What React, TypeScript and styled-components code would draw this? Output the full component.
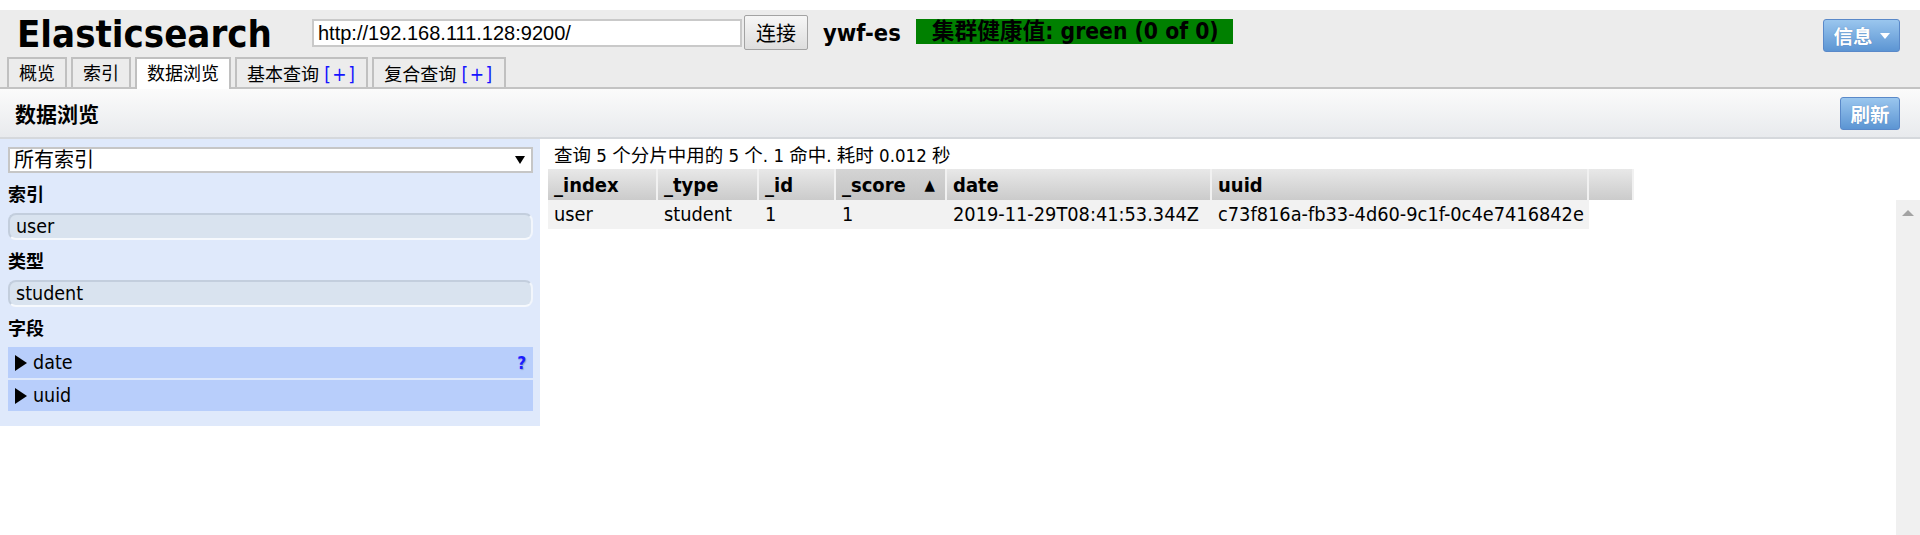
import React from "react";
import styled, { createGlobalStyle } from "styled-components";

const SANS = `"DejaVu Sans Condensed", "DejaVu Sans", "Noto Sans CJK SC", sans-serif`;

const GlobalStyle = createGlobalStyle`
  html, body { margin: 0; padding: 0; background: #ffffff; overflow: hidden; }
  body { font-family: ${SANS}; font-stretch: condensed; color: #000; }
  * { box-sizing: border-box; }
`;

const Page = styled.div`
  height: 100vh;
  display: flex;
  flex-direction: column;
  padding-top: 10px;
`;

const Header = styled.header`
  flex: none;
  background: #ececec;
  border-bottom: 2px solid #c3c3c3;
  display: flex;
  flex-direction: column;
`;

const HeaderTop = styled.div`
  height: 47px;
  display: flex;
  align-items: flex-start;
  padding: 0 20px 0 17px;
`;

const Title = styled.h1`
  flex: 0 0 295px;
  margin: 2px 0 0 0;
  font-size: 38px;
  line-height: 45px;
  font-weight: bold;
  white-space: nowrap;
`;

const UrlInput = styled.input`
  width: 430px;
  height: 28px;
  margin-top: 9px;
  border: 2px solid #c9c9c9;
  background: #fff;
  padding: 0 4px;
  font-family: "Liberation Sans", Arial, sans-serif;
  font-stretch: normal;
  font-size: 20px;
  color: #000;
  outline: none;
`;

const ConnectButton = styled.button`
  width: 64px;
  height: 35px;
  margin: 5px 0 0 2px;
  border: 1px solid #a3a3a3;
  border-radius: 2px;
  background: linear-gradient(#f6f6f6, #dedede);
  font-family: ${SANS};
  font-size: 20px;
  color: #000;
  padding: 0;
`;

const ClusterName = styled.span`
  margin: 10px 0 0 15px;
  font-size: 23.5px;
  line-height: 26px;
  font-weight: bold;
`;

const HealthBadge = styled.span`
  width: 317px;
  height: 25px;
  margin: 9px 0 0 15px;
  padding-left: 16px;
  background: #008000;
  font-size: 22.7px;
  line-height: 25px;
  font-weight: bold;
  white-space: nowrap;
  overflow: hidden;
`;

const BlueButton = styled.button<{ $w: number }>`
  width: ${(p) => p.$w}px;
  height: 33px;
  border: 1px solid #5a89c9;
  border-radius: 3px;
  background: linear-gradient(#9ac6ee, #5c95d3);
  color: #fff;
  font-family: ${SANS};
  font-size: 19.5px;
  font-weight: bold;
  display: flex;
  align-items: center;
  justify-content: center;
  padding: 0;
  text-shadow: 0 0 1px rgba(40, 80, 140, 0.5);
`;

const InfoWrap = styled.div`
  margin: 9px 0 0 auto;
`;

const Caret = styled.span`
  width: 0;
  height: 0;
  margin-left: 7px;
  border-top: 6px solid #fff;
  border-left: 5px solid transparent;
  border-right: 5px solid transparent;
`;

const Tabs = styled.nav`
  height: 30px;
  display: flex;
  align-items: flex-start;
  gap: 4px;
  padding-left: 7px;
`;

const Tab = styled.div<{ $active?: boolean }>`
  height: ${(p) => (p.$active ? 32 : 30)}px;
  position: relative;
  z-index: ${(p) => (p.$active ? 1 : 0)};
  padding: 2px 10px 0;
  border: 2px solid #c0c0c0;
  border-bottom: 0;
  background: ${(p) => (p.$active ? "#ffffff" : "#ececec")};
  font-size: 18px;
  line-height: 26px;
  white-space: nowrap;
  overflow: hidden;
`;

const Plus = styled.span`
  color: #1515ff;
  font-size: 19px;
  letter-spacing: 1.5px;
`;

const Toolbar = styled.div`
  flex: none;
  height: 50px;
  border-bottom: 2px solid #d5d8dc;
  background: linear-gradient(#fbfbfb, #e8eaed);
  display: flex;
  align-items: center;
  justify-content: space-between;
  padding: 0 20px 0 15px;
`;

const ToolbarTitle = styled.h2`
  margin: 0;
  font-size: 21px;
  font-weight: bold;
`;

const Main = styled.div`
  flex: 1;
  min-height: 0;
  display: flex;
`;

const Sidebar = styled.aside`
  flex: 0 0 540px;
  align-self: flex-start;
  background: #dfe9fb;
  padding: 8px 7px 15px 8px;
  display: flex;
  flex-direction: column;
`;

const SelectBox = styled.div`
  height: 26px;
  border: 2px solid #c6c6c6;
  background: #fff;
  display: flex;
  align-items: center;
  justify-content: space-between;
  padding: 0 4px 0 4px;
  overflow: hidden;
  font-size: 20px;
  line-height: 22px;
`;

const SelectArrow = styled.span`
  width: 0;
  height: 0;
  margin-right: 2px;
  border-top: 8px solid #000;
  border-left: 5px solid transparent;
  border-right: 5px solid transparent;
`;

const SectionLabel = styled.div`
  height: 40px;
  padding-top: 4px;
  line-height: 36px;
  font-size: 18px;
  font-weight: bold;
`;

const ValueField = styled.div`
  height: 27px;
  border-radius: 8px;
  border: 2px solid;
  border-color: #c3cedd #f2f6fc #f6f9fd #c3cedd;
  background: #d9e3ef;
  padding-left: 6px;
  font-size: 19.5px;
  line-height: 23px;
`;

const FieldList = styled.div`
  display: flex;
  flex-direction: column;
  gap: 2px;
`;

const FieldRow = styled.div`
  height: 31px;
  background: #b8cefb;
  display: flex;
  align-items: center;
  padding: 0 7px 0 7px;
  font-size: 19.5px;
`;

const Expander = styled.span`
  width: 0;
  height: 0;
  margin-right: 6px;
  border-left: 12px solid #000;
  border-top: 8px solid transparent;
  border-bottom: 8px solid transparent;
`;

const FieldName = styled.span`
  flex: 1;
`;

const Help = styled.span`
  color: #1a1aff;
  font-weight: bold;
  font-size: 17px;
  text-shadow: 1px 1px 1px #8e9fd0;
`;

const Content = styled.section`
  flex: 1;
  min-width: 0;
  display: flex;
  flex-direction: column;
  padding-left: 8px;
`;

const Summary = styled.div`
  padding: 4px 0 0 6px;
  line-height: 26px;
  font-size: 18.5px;
  white-space: nowrap;
`;

const HeadRow = styled.div`
  display: flex;
  height: 31px;
`;

const HeadCell = styled.div<{ $w: number; $sorted?: boolean }>`
  flex: 0 0 ${(p) => p.$w}px;
  display: flex;
  align-items: center;
  justify-content: space-between;
  padding: 0 10px 0 6px;
  border-right: 2px solid #f1f1f1;
  background: ${(p) =>
    p.$sorted
      ? "linear-gradient(#d4d4d4, #c4c4c4)"
      : "linear-gradient(#e8e8e8, #cbcbcb)"};
  font-size: 20px;
  font-weight: bold;
  white-space: nowrap;
`;

const SortMark = styled.span`
  font-size: 15px;
`;

const BodyArea = styled.div`
  flex: 1;
  min-height: 0;
  display: flex;
`;

const Rows = styled.div`
  flex: 1;
`;

const DataRow = styled.div`
  display: flex;
`;

const Cell = styled.div<{ $w: number }>`
  flex: 0 0 ${(p) => p.$w}px;
  height: 29px;
  line-height: 29px;
  padding-left: 6px;
  background: #f2f2f2;
  font-size: 19.8px;
  white-space: nowrap;
  overflow: hidden;
`;

const ScrollTrack = styled.div`
  flex: 0 0 24px;
  background: #f0f0f0;
  display: flex;
  justify-content: center;
  padding-top: 10px;
`;

const ScrollUp = styled.span`
  width: 0;
  height: 0;
  border-bottom: 6px solid #a3a3a3;
  border-left: 6px solid transparent;
  border-right: 6px solid transparent;
`;

const columns = [
  { key: "_index", w: 110 },
  { key: "_type", w: 101 },
  { key: "_id", w: 77 },
  { key: "_score", w: 111, sorted: true },
  { key: "date", w: 265 },
  { key: "uuid", w: 377 },
];

const row = ["user", "student", "1", "1", "2019-11-29T08:41:53.344Z", "c73f816a-fb33-4d60-9c1f-0c4e7416842e"];

export default function App() {
  return (
    <>
      <GlobalStyle />
      <Page>
        <Header>
          <HeaderTop>
            <Title>Elasticsearch</Title>
            <UrlInput readOnly value="http://192.168.111.128:9200/" />
            <ConnectButton>连接</ConnectButton>
            <ClusterName>ywf-es</ClusterName>
            <HealthBadge>集群健康值: green (0 of 0)</HealthBadge>
            <InfoWrap>
              <BlueButton $w={77}>
                信息<Caret />
              </BlueButton>
            </InfoWrap>
          </HeaderTop>
          <Tabs>
            <Tab>概览</Tab>
            <Tab>索引</Tab>
            <Tab $active>数据浏览</Tab>
            <Tab>
              基本查询 <Plus>[+]</Plus>
            </Tab>
            <Tab>
              复合查询 <Plus>[+]</Plus>
            </Tab>
          </Tabs>
        </Header>
        <Toolbar>
          <ToolbarTitle>数据浏览</ToolbarTitle>
          <BlueButton $w={60}>刷新</BlueButton>
        </Toolbar>
        <Main>
          <Sidebar>
            <SelectBox>
              <span>所有索引</span>
              <SelectArrow />
            </SelectBox>
            <SectionLabel>索引</SectionLabel>
            <ValueField>user</ValueField>
            <SectionLabel>类型</SectionLabel>
            <ValueField>student</ValueField>
            <SectionLabel>字段</SectionLabel>
            <FieldList>
              <FieldRow>
                <Expander />
                <FieldName>date</FieldName>
                <Help>?</Help>
              </FieldRow>
              <FieldRow>
                <Expander />
                <FieldName>uuid</FieldName>
              </FieldRow>
            </FieldList>
          </Sidebar>
          <Content>
            <Summary>查询 5 个分片中用的 5 个. 1 命中. 耗时 0.012 秒</Summary>
            <HeadRow>
              {columns.map((c) => (
                <HeadCell key={c.key} $w={c.w} $sorted={c.sorted}>
                  <span>{c.key}</span>
                  {c.sorted && <SortMark>▲</SortMark>}
                </HeadCell>
              ))}
              <HeadCell $w={45} />
            </HeadRow>
            <BodyArea>
              <Rows>
                <DataRow>
                  {row.map((v, i) => (
                    <Cell key={i} $w={columns[i].w}>
                      {v}
                    </Cell>
                  ))}
                </DataRow>
              </Rows>
              <ScrollTrack>
                <ScrollUp />
              </ScrollTrack>
            </BodyArea>
          </Content>
        </Main>
      </Page>
    </>
  );
}
